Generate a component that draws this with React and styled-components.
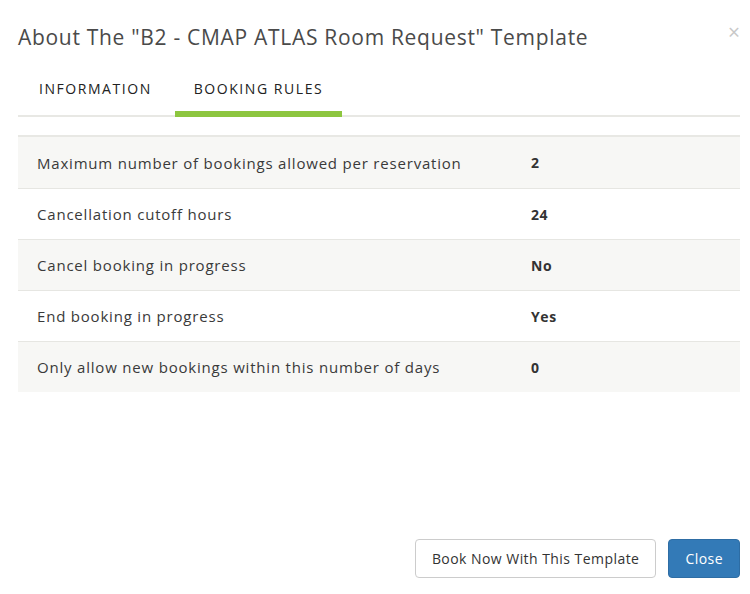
import React, { useState } from "react";
import styled, { createGlobalStyle } from "styled-components";

const GlobalStyle = createGlobalStyle`
  html, body {
    margin: 0;
    padding: 0;
    background: #ffffff;
  }
  body {
    font-family: "Open Sans", "Liberation Sans", sans-serif;
    color: #333;
  }
`;

const Modal = styled.div`
  width: 750px;
  height: 594px;
  box-sizing: border-box;
  padding: 0 10px 0 18px;
  display: flex;
  flex-direction: column;
`;

const Header = styled.div`
  display: flex;
  justify-content: space-between;
  align-items: flex-start;
  padding-top: 22px;
`;

const Title = styled.h4`
  margin: 0;
  font-size: 21px;
  font-weight: 400;
  color: #4a4a4a;
  line-height: 30px;
  letter-spacing: 0.7px;
`;

const CloseX = styled.button`
  border: 0;
  background: none;
  padding: 0;
  font-size: 21px;
  line-height: 20px;
  color: #c8c8c8;
  cursor: pointer;
  font-family: "Open Sans", sans-serif;
`;

const Tabs = styled.div`
  display: flex;
  margin-top: 27px;
  padding-left: 2px;
  border-bottom: 2px solid #e8e8e4;
`;

const Tab = styled.button`
  border: 0;
  background: none;
  font-family: "Open Sans", sans-serif;
  font-size: 14px;
  letter-spacing: 1.55px;
  color: #222;
  text-transform: uppercase;
  padding: 0 19px 12px 19px;
  margin: 0 4px -2px 0;
  line-height: 20px;
  border-bottom: 6px solid ${(p) => (p.active ? "#8dc63f" : "transparent")};
  cursor: pointer;
`;

const Spacer = styled.div`
  height: 18px;
  border-bottom: 2px solid #e8e8e4;
`;

const Table = styled.div`
  display: flex;
  flex-direction: column;
`;

const Row = styled.div`
  display: grid;
  grid-template-columns: 513px 1fr;
  align-items: center;
  height: 51px;
  box-sizing: border-box;
  background: ${(p) => (p.striped ? "#f7f7f5" : "#ffffff")};
  border-top: ${(p) => (p.first ? "none" : "1px solid #e6e6e2")};
  font-size: 15px;
  letter-spacing: 0.8px;
`;

const Label = styled.div`
  padding-left: 19px;
  color: #3a3a3a;
`;

const Value = styled.div`
  font-weight: 700;
  font-size: 14px;
  letter-spacing: 0.6px;
  color: #333;
`;

const Footer = styled.div`
  margin-top: auto;
  display: flex;
  justify-content: flex-end;
  gap: 12px;
  padding-bottom: 16px;
`;

const Button = styled.button`
  height: 39px;
  box-sizing: border-box;
  border-radius: 4px;
  font-family: "Open Sans", sans-serif;
  font-size: 14px;
  letter-spacing: 0.45px;
  padding: 0 16px;
  cursor: pointer;
  border: 1px solid ${(p) => (p.primary ? "#2e6da4" : "#cccccc")};
  background: ${(p) => (p.primary ? "#337ab7" : "#ffffff")};
  color: ${(p) => (p.primary ? "#ffffff" : "#333333")};
`;

const rules = [
  ["Maximum number of bookings allowed per reservation", "2"],
  ["Cancellation cutoff hours", "24"],
  ["Cancel booking in progress", "No"],
  ["End booking in progress", "Yes"],
  ["Only allow new bookings within this number of days", "0"],
];

export default function App() {
  const [tab, setTab] = useState("rules");
  return (
    <>
      <GlobalStyle />
      <Modal>
        <Header>
          <Title>About The "B2 - CMAP ATLAS Room Request" Template</Title>
          <CloseX aria-label="Close">×</CloseX>
        </Header>
        <Tabs>
          <Tab active={tab === "info"} onClick={() => setTab("info")}>
            Information
          </Tab>
          <Tab active={tab === "rules"} onClick={() => setTab("rules")}>
            Booking Rules
          </Tab>
        </Tabs>
        <Spacer />
        <Table>
          {rules.map(([label, value], i) => (
            <Row key={label} striped={i % 2 === 0} first={i === 0}>
              <Label>{label}</Label>
              <Value>{value}</Value>
            </Row>
          ))}
        </Table>
        <Footer>
          <Button>Book Now With This Template</Button>
          <Button primary>Close</Button>
        </Footer>
      </Modal>
    </>
  );
}
